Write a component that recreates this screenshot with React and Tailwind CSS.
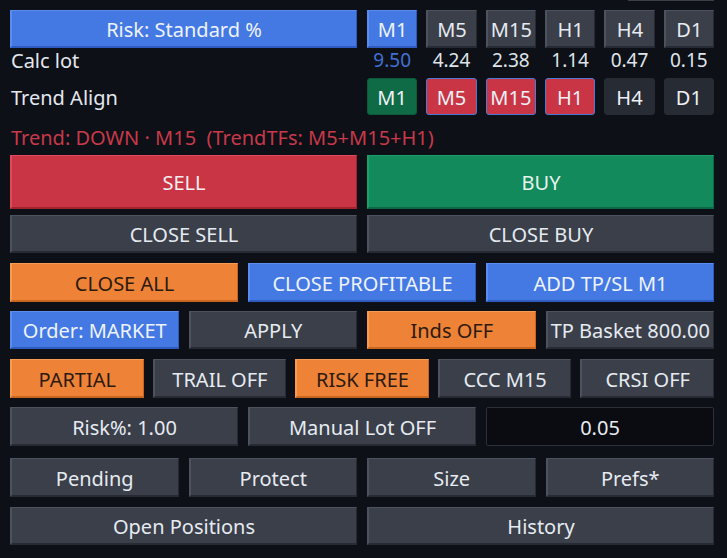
import React from 'react';

const tone = {
  gray: 'bg-[#3a3f4a] border-t-[#4d535e] border-l-[#4d535e] border-b-[#262a32] border-r-[#262a32] text-[#e6ebf1]',
  blue: 'bg-[#4479e3] border-t-[#5b8df0] border-l-[#5b8df0] border-b-[#2d5bc0] border-r-[#2d5bc0] text-[#eef3fb]',
  red: 'bg-[#c93545] border-t-[#e04b5b] border-l-[#e04b5b] border-b-[#a2222f] border-r-[#a2222f] text-[#f6eef0]',
  green: 'bg-[#128a5c] border-t-[#1a9f6b] border-l-[#1a9f6b] border-b-[#0b6a45] border-r-[#0b6a45] text-[#e8f5ef]',
  orange: 'bg-[#ee8237] border-t-[#f69b52] border-l-[#f69b52] border-b-[#c8661f] border-r-[#c8661f] text-[#2b1a10]',
};

function Btn({ children, color = 'gray', className = '' }) {
  return (
    <div
      className={`flex items-center justify-center whitespace-nowrap pt-[3px] border-t border-l-2 border-b-2 border-r ${tone[color]} ${className}`}
    >
      {children}
    </div>
  );
}

const tfs = ['M1', 'M5', 'M15', 'H1', 'H4', 'D1'];
const lots = ['9.50', '4.24', '2.38', '1.14', '0.47', '0.15'];

function TrendChip({ label, kind }) {
  const cls =
    kind === 'green'
      ? 'bg-[#0f6b46] border border-[#0c5a3a]'
      : kind === 'red'
      ? 'bg-[#c93545] border border-[#4b7ad8]'
      : 'bg-[#262b34] border border-[#262b34]';
  return (
    <div className={`flex items-center justify-center pt-[2px] rounded-[3px] h-[37px] text-[#eef1f5] ${cls}`}>
      {label}
    </div>
  );
}

export default function App() {
  return (
    <div
      className="w-[727px] h-[558px] bg-[#0d1016] text-[20px] leading-none overflow-hidden"
      style={{ fontFamily: '"Noto Sans", "Open Sans", sans-serif' }}
    >
      <div className="h-[2px] flex">
        <div className="ml-[628px] w-[86px] h-[1px] bg-[#3a3f4a]" />
      </div>

      <div className="ml-[10px] w-[704px] pt-[8px]">
        {/* risk + timeframes */}
        <div className="grid grid-cols-2 gap-[10px] h-[38px]">
          <Btn color="blue">Risk: Standard %</Btn>
          <div className="grid grid-cols-6 gap-[9px]">
            {tfs.map((t, i) => (
              <Btn key={t} color={i === 0 ? 'blue' : 'gray'}>
                {t}
              </Btn>
            ))}
          </div>
        </div>

        <div className="grid grid-cols-2 gap-[10px] h-[25px] items-center">
          <div className="pl-[1px] text-[#e4e8ee]">Calc lot</div>
          <div className="grid grid-cols-6 gap-[9px] text-[19px]">
            {lots.map((v, i) => (
              <div key={v} className={`text-center ${i === 0 ? 'text-[#3f70d4]' : 'text-[#dfe4ea]'}`}>
                {v}
              </div>
            ))}
          </div>
        </div>

        <div className="grid grid-cols-2 gap-[10px] mt-[5px] items-center">
          <div className="pl-[1px] text-[#e4e8ee] pt-[3px]">Trend Align</div>
          <div className="grid grid-cols-6 gap-[9px]">
            <TrendChip label="M1" kind="green" />
            <TrendChip label="M5" kind="red" />
            <TrendChip label="M15" kind="red" />
            <TrendChip label="H1" kind="red" />
            <TrendChip label="H4" />
            <TrendChip label="D1" />
          </div>
        </div>

        <div className="h-[24px] mt-[10px] flex items-center pt-[1px] pl-[1px] text-[#c8394a] whitespace-pre">
          {'Trend: DOWN · M15  (TrendTFs: M5+M15+H1)'}
        </div>

        <div className="grid grid-cols-2 gap-[10px] h-[54px] mt-[6px]">
          <Btn color="red">SELL</Btn>
          <Btn color="green">BUY</Btn>
        </div>

        <div className="grid grid-cols-2 gap-[10px] h-[38px] mt-[6px]">
          <Btn>CLOSE SELL</Btn>
          <Btn>CLOSE BUY</Btn>
        </div>

        <div className="grid grid-cols-3 gap-[10px] h-[39px] mt-[10px]">
          <Btn color="orange">CLOSE ALL</Btn>
          <Btn color="blue">CLOSE PROFITABLE</Btn>
          <Btn color="blue">ADD TP/SL M1</Btn>
        </div>

        <div className="grid grid-cols-4 gap-[10px] h-[38px] mt-[9px]">
          <Btn color="blue">Order: MARKET</Btn>
          <Btn>APPLY</Btn>
          <Btn color="orange">Inds OFF</Btn>
          <Btn>TP Basket 800.00</Btn>
        </div>

        <div className="grid grid-cols-5 gap-[9px] h-[39px] mt-[10px]">
          <Btn color="orange">PARTIAL</Btn>
          <Btn>TRAIL OFF</Btn>
          <Btn color="orange">RISK FREE</Btn>
          <Btn>CCC M15</Btn>
          <Btn>CRSI OFF</Btn>
        </div>

        <div className="grid grid-cols-3 gap-[10px] h-[39px] mt-[9px]">
          <Btn>Risk%: 1.00</Btn>
          <Btn>Manual Lot OFF</Btn>
          <div className="flex items-center justify-center pt-[3px] bg-[#0a0c11] border border-[#2b3039] rounded-[2px] text-[#e6ebf1]">
            0.05
          </div>
        </div>

        <div className="grid grid-cols-4 gap-[10px] h-[39px] mt-[12px]">
          <Btn>Pending</Btn>
          <Btn>Protect</Btn>
          <Btn>Size</Btn>
          <Btn>Prefs*</Btn>
        </div>

        <div className="grid grid-cols-2 gap-[10px] h-[38px] mt-[10px]">
          <Btn>Open Positions</Btn>
          <Btn>History</Btn>
        </div>
      </div>
    </div>
  );
}
